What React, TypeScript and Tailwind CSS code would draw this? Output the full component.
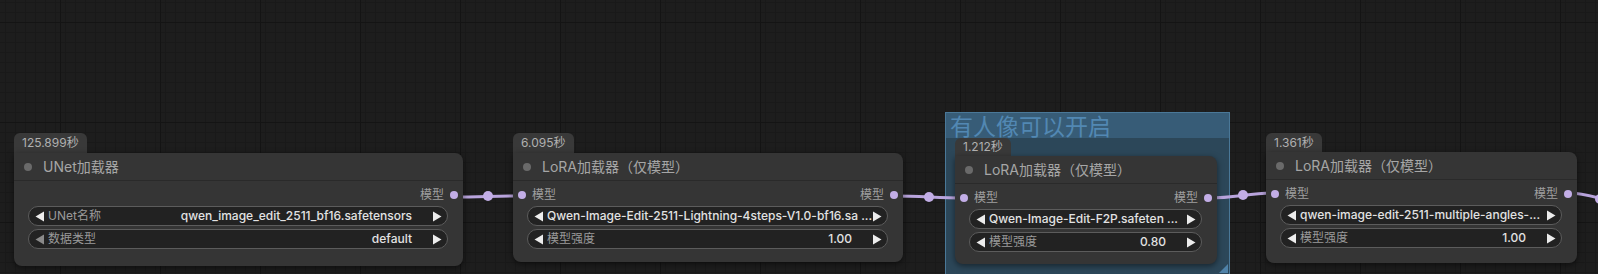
import React from 'react';

type Widget = { label?: string; value: string; dimLeft?: boolean };

type NodeProps = {
  pos: string;
  boxSize: string;
  badgeH: string;
  time: string;
  title: string;
  hasInput?: boolean;
  widgets: Widget[];
};

function Arrow({ dir, dim }: { dir: 'left' | 'right'; dim?: boolean }) {
  return (
    <svg width="10" height="11" viewBox="0 0 10 11" className="shrink-0">
      {dir === 'left' ? (
        <polygon points="9,0.5 9,10.5 0.5,5.5" fill={dim ? '#8a8a8a' : '#ececec'} />
      ) : (
        <polygon points="1,0.5 1,10.5 9.5,5.5" fill="#ececec" />
      )}
    </svg>
  );
}

function WidgetRow({ w }: { w: Widget }) {
  return (
    <div className="flex h-[20px] items-center rounded-full border border-[#5c5c5c] bg-[#222222] pl-[6px] pr-[5px] text-[12px]">
      <Arrow dir="left" dim={w.dimLeft} />
      {w.label ? (
        <>
          <span className="ml-[3px] text-[#9a9a9a]">{w.label}</span>
          <span className="ml-auto font-medium text-[#e2e2e2]">{w.value}</span>
        </>
      ) : (
        <span className="ml-[3px] whitespace-nowrap font-medium text-[#e2e2e2]">{w.value}</span>
      )}
      <span className={w.label ? 'w-[20px]' : 'ml-auto'} />
      <Arrow dir="right" />
    </div>
  );
}

function Node({ pos, boxSize, badgeH, time, title, hasInput, widgets }: NodeProps) {
  return (
    <div className={`absolute flex flex-col items-start ${pos}`}>
      <div className={`flex items-center rounded-t-[6px] bg-[#393939] px-[8px] text-[12px] text-[#b0b0b0] ${badgeH}`}>
        {time}
      </div>
      <div className={`flex flex-col rounded-[8px] rounded-tl-none bg-[#353535] shadow-[0_2px_6px_rgba(0,0,0,0.5)] ${boxSize}`}>
        <div className="flex h-[28px] items-center border-b border-[#2a2a2a] pl-[10px]">
          <span className="h-[8px] w-[8px] rounded-full bg-[#6a6a6a]" />
          <span className="ml-[11px] text-[14px] text-[#a6a6a6]">{title}</span>
        </div>
        <div className="mt-[4px] flex h-[20px] items-center px-[5px] text-[12px] text-[#9f9f9f]">
          {hasInput && (
            <>
              <span className="h-[8px] w-[8px] rounded-full bg-[#c2ade6]" />
              <span className="ml-[6px]">模型</span>
            </>
          )}
          <span className="ml-auto mr-[6px]">模型</span>
          <span className="h-[8px] w-[8px] rounded-full bg-[#c2ade6]" />
        </div>
        <div className="mt-[1px] flex flex-col gap-[3px] pl-[14px] pr-[15px]">
          {widgets.map((w, i) => (
            <WidgetRow key={i} w={w} />
          ))}
        </div>
      </div>
    </div>
  );
}

function link(x1: number, y1: number, x2: number, y2: number) {
  const d = Math.max(20, (x2 - x1) * 0.4);
  return `M${x1} ${y1} C${x1 + d} ${y1}, ${x2 - d} ${y2}, ${x2} ${y2}`;
}

const links = [
  { a: [453, 197], b: [522, 196], m: [488, 196] },
  { a: [894, 196], b: [965, 198], m: [929, 197] },
  { a: [1209, 198], b: [1276, 193], m: [1243, 195] },
  { a: [1568, 193], b: [1640, 206], m: [1600, 199] },
];

export default function App() {
  return (
    <div className="relative h-[274px] w-[1598px] overflow-hidden bg-[#1d1d1d] font-['Inter','Noto_Sans_CJK_SC',sans-serif] [background-image:linear-gradient(to_right,#141414_1px,transparent_1px),linear-gradient(to_bottom,#141414_1px,transparent_1px),linear-gradient(to_right,#191919_1px,transparent_1px),linear-gradient(to_bottom,#191919_1px,transparent_1px)] [background-size:100px_100px,100px_100px,10px_10px,10px_10px] [background-position:60px_22px,60px_22px,5px_2px,5px_2px]">
      {/* Group */}
      <div className="absolute left-[945px] top-[112px] h-[163px] w-[285px] border border-[#4a7898] bg-[#2c4759]">
        <div className="h-[25px] bg-[#375c77] pl-[4px] text-[23px] leading-[28px] text-[#5288b3]">有人像可以开启</div>
        <svg className="absolute bottom-[1px] right-[1px]" width="9" height="9" viewBox="0 0 9 9">
          <polygon points="9,0 9,9 0,9" fill="#4f82a8" />
        </svg>
      </div>

      {/* Links */}
      <svg className="absolute inset-0" width="1598" height="274">
        {links.map((l, i) => (
          <g key={i}>
            <path d={link(l.a[0], l.a[1], l.b[0], l.b[1])} stroke="#b9a4dd" strokeWidth="3" fill="none" />
            <circle cx={l.m[0]} cy={l.m[1]} r="5" fill="#c2ade6" />
          </g>
        ))}
      </svg>

      <Node
        pos="left-[14px] top-[133px]"
        boxSize="w-[449px] h-[113px]"
        badgeH="h-[20px]"
        time="125.899秒"
        title="UNet加载器"
        widgets={[
          { label: 'UNet名称', value: 'qwen_image_edit_2511_bf16.safetensors' },
          { label: '数据类型', value: 'default', dimLeft: true },
        ]}
      />
      <Node
        pos="left-[513px] top-[133px]"
        boxSize="w-[390px] h-[109px]"
        badgeH="h-[20px]"
        time="6.095秒"
        title="LoRA加载器（仅模型）"
        hasInput
        widgets={[
          { value: 'Qwen-Image-Edit-2511-Lightning-4steps-V1.0-bf16.sa ...' },
          { label: '模型强度', value: '1.00' },
        ]}
      />
      <Node
        pos="left-[955px] top-[138px]"
        boxSize="w-[262px] h-[108px]"
        badgeH="h-[18px]"
        time="1.212秒"
        title="LoRA加载器（仅模型）"
        hasInput
        widgets={[
          { value: 'Qwen-Image-Edit-F2P.safeten ...' },
          { label: '模型强度', value: '0.80' },
        ]}
      />
      <Node
        pos="left-[1266px] top-[133px]"
        boxSize="w-[311px] h-[111px]"
        badgeH="h-[19px]"
        time="1.361秒"
        title="LoRA加载器（仅模型）"
        hasInput
        widgets={[
          { value: 'qwen-image-edit-2511-multiple-angles-...' },
          { label: '模型强度', value: '1.00' },
        ]}
      />
    </div>
  );
}
